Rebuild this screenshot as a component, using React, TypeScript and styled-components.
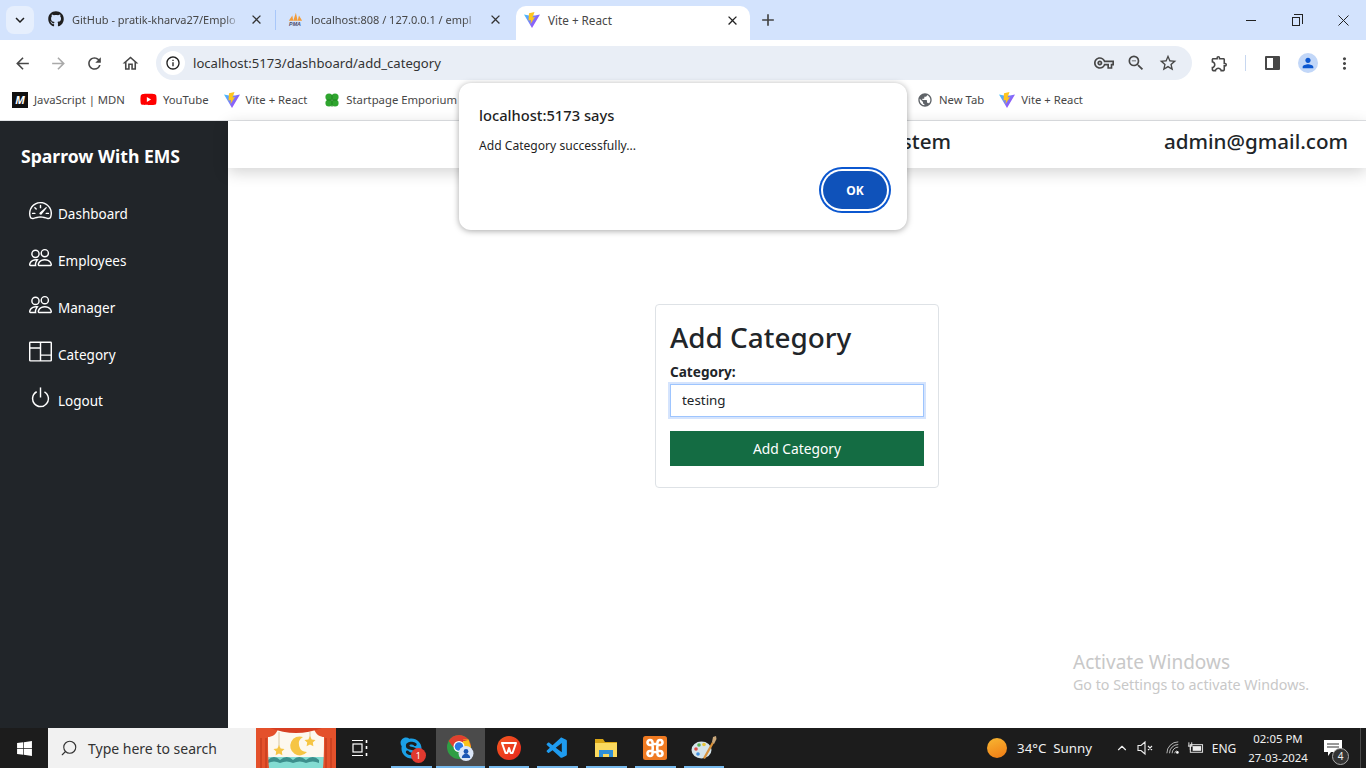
import * as React from 'react';
import styled, { createGlobalStyle } from 'styled-components';
import { BsSpeedometer2, BsPeople, BsColumns, BsPower } from 'react-icons/bs';
import {
  MdArrowBack, MdArrowForward, MdRefresh, MdOutlineHome, MdInfoOutline, MdOutlineVpnKey, MdOutlineZoomOut,
  MdStarBorder, MdOutlineExtension, MdMoreVert, MdPerson, MdClose, MdAdd, MdKeyboardArrowDown, MdPublic,
} from 'react-icons/md';
import { FaGithub, FaYoutube, FaWindows, FaSkype } from 'react-icons/fa';
import { VscVscode } from 'react-icons/vsc';
import { FiSearch, FiChevronUp } from 'react-icons/fi';

const GlobalStyle = createGlobalStyle`
  html, body { margin: 0; padding: 0; height: 100%; overflow: hidden; }
  body { font-family: "Noto Sans", "Open Sans", sans-serif; background: #fff; color: #212529; }
  * { box-sizing: border-box; }
`;

const Screen = styled.div`
  position: relative;
  width: 1366px;
  height: 768px;
  display: flex;
  flex-direction: column;
  overflow: hidden;
`;

/* browser chrome */
const TabStrip = styled.div`
  height: 40px;
  flex: none;
  background: #d3e3fd;
  display: flex;
  align-items: flex-start;
  padding: 6px 0 0 6px;
  font-size: 12px;
  color: #474747;
`;

const TabMenu = styled.div`
  width: 28px;
  height: 28px;
  border-radius: 8px;
  background: #e6effd;
  display: flex;
  align-items: center;
  justify-content: center;
  color: #1f1f1f;
  font-size: 18px;
  margin-right: 8px;
`;

const Tab = styled.div<{ $active?: boolean; $w: number; $after?: number }>`
  width: ${p => p.$w}px;
  height: 34px;
  margin-right: ${p => p.$after ?? 0}px;
  display: flex;
  align-items: center;
  gap: 8px;
  padding: 0 10px 6px 6px;
  flex: none;
  border-radius: 10px 10px 0 0;
  background: ${p => (p.$active ? '#fff' : 'transparent')};
  padding-left: ${p => (p.$active ? 8 : 6)}px;
  padding-bottom: ${p => (p.$active ? 6 : 8)}px;
`;

const TabTitle = styled.span<{ $fade?: boolean }>`
  flex: 1;
  white-space: nowrap;
  font-size: ${p => (p.$fade ? 11 : 11.7)}px;
  ${p => p.$fade && `
    -webkit-mask-image: linear-gradient(90deg, #000 90%, transparent);
    mask-image: linear-gradient(90deg, #000 90%, transparent);
  `}
`;

const TabDivider = styled.div`
  width: 1px;
  height: 20px;
  margin: 4px 5px 0 1px;
  background: #a8c7fa;
  flex: none;
`;

const NewTab = styled.div`
  width: 20px;
  height: 28px;
  margin-left: 8px;
  font-size: 20px;
  color: #444;
  display: flex;
  align-items: center;
  justify-content: center;
`;

const WindowControls = styled.div`
  margin-left: auto;
  display: flex;
  height: 28px;
  color: #222;
`;

const WindowButton = styled.div`
  width: 46px;
  height: 28px;
  display: flex;
  align-items: center;
  justify-content: center;
`;

const MinimizeIcon = styled.div`
  width: 10px;
  height: 1px;
  background: #222;
`;

const RestoreIcon = styled.div`
  width: 8px;
  height: 9px;
  margin: 2px 2px 0 0;
  border: 1px solid #222;
  position: relative;
  &::after {
    content: '';
    position: absolute;
    top: -4px;
    right: -4px;
    width: 8px;
    height: 9px;
    border-top: 1px solid #222;
    border-right: 1px solid #222;
  }
`;

const ToolBar = styled.div`
  height: 45px;
  flex: none;
  background: #fff;
  border-radius: 10px 10px 0 0;
  display: flex;
  align-items: center;
  padding: 1px 0 0 12px;
  color: #474747;
`;

const NavIcon = styled.div<{ $muted?: boolean; $gap: number; $before?: number }>`
  width: 20px;
  height: 20px;
  margin-right: ${p => p.$gap}px;
  margin-left: ${p => p.$before ?? 0}px;
  font-size: 19px;
  display: flex;
  align-items: center;
  justify-content: center;
  color: ${p => (p.$muted ? '#a9a9a9' : '#474747')};
  flex: none;
`;

const AddressBar = styled.div`
  width: 1036px;
  height: 34px;
  border-radius: 17px;
  background: #e9eef6;
  display: flex;
  align-items: center;
  padding: 0 14px 0 5px;
  font-size: 14px;
  color: #1f1f1f;
  flex: none;
`;

const SiteInfo = styled.div`
  width: 24px;
  height: 24px;
  border-radius: 50%;
  background: #fff;
  font-size: 16px;
  display: flex;
  align-items: center;
  justify-content: center;
  margin-right: 8px;
`;

const Url = styled.span`
  flex: 1;
  font-size: 13.1px;
  color: #333;
`;

const BarIcons = styled.div`
  display: flex;
  gap: 12px;
  font-size: 20px;
  color: #474747;
`;

const ToolDivider = styled.div`
  width: 1px;
  height: 16px;
  background: #c7d7f0;
  margin: 0 19px 0 16px;
`;

const Avatar = styled.div`
  width: 20px;
  height: 20px;
  border-radius: 50%;
  background: #c2d7f8;
  color: #0b57d0;
  font-size: 16px;
  display: flex;
  align-items: center;
  justify-content: center;
  margin: 0 16px 0 18px;
`;

const PanelIcon = styled.div`
  width: 15px;
  height: 14px;
  border: 2px solid #474747;
  border-right-width: 7px;
  border-radius: 1px;
`;

const BookmarkBar = styled.div`
  height: 36px;
  flex: none;
  background: #fff;
  border-bottom: 1px solid #e1e3e6;
  display: flex;
  align-items: center;
  padding: 0 0 6px 12px;
  font-size: 11.3px;
  color: #474747;
`;

const Bookmark = styled.div<{ $offset?: number }>`
  display: flex;
  align-items: center;
  gap: 6px;
  margin-right: 15px;
  margin-left: ${p => p.$offset ?? 0}px;
  white-space: nowrap;
`;

const MdnMark = styled.div`
  width: 16px;
  height: 16px;
  background: #111;
  color: #fff;
  font-size: 11px;
  font-weight: 700;
  font-style: italic;
  text-align: center;
  line-height: 16px;
`;

/* page */
const Body = styled.div`
  flex: 1;
  display: flex;
  min-height: 0;
`;

const Sidebar = styled.aside`
  width: 228px;
  flex: none;
  background: #212529;
  color: #fff;
  padding: 22px 0 0 21px;
`;

const Brand = styled.div`
  font-size: 17.6px;
  font-weight: 700;
  line-height: 26px;
  margin-bottom: 22px;
  white-space: nowrap;
`;

const NavItem = styled.div`
  display: flex;
  align-items: center;
  height: 46.75px;
  padding-left: 8px;
  font-size: 13.5px;
  gap: 6px;
  svg { font-size: 23px; margin-top: -7px; }
`;

const Main = styled.main`
  flex: 1;
  display: flex;
  flex-direction: column;
  min-width: 0;
`;

const TopBar = styled.header`
  height: 47px;
  flex: none;
  background: #fff;
  box-shadow: 0 4px 16px rgba(0, 0, 0, 0.18);
  display: flex;
  align-items: center;
  padding: 0 18px 8px 0;
  font-size: 20.6px;
  font-weight: 500;
`;

const AppTitle = styled.div`
  width: 723px;
  text-align: right;
  white-space: nowrap;
`;

const UserMail = styled.div`
  margin-left: auto;
  white-space: nowrap;
`;

const Content = styled.div`
  flex: 1;
  display: flex;
  justify-content: center;
  padding-top: 136px;
`;

const Card = styled.form`
  width: 284px;
  height: 184px;
  border: 1px solid #dee2e6;
  border-radius: 4px;
  padding: 14px;
`;

const CardTitle = styled.h2`
  margin: 0 0 8px;
  font-size: 27.9px;
  line-height: 36px;
  font-weight: 500;
`;

const FieldLabel = styled.label`
  display: block;
  font-size: 13.6px;
  font-weight: 700;
  line-height: 17px;
`;

const FieldInput = styled.input`
  display: block;
  width: 254px;
  height: 33px;
  margin: 4px 0 14px;
  border: 1px solid #9ec5fe;
  box-shadow: 0 0 0 2px #d5e4fd;
  outline: 0;
  padding: 0 11px 2px;
  font: inherit;
  font-size: 13.4px;
  color: #212529;
  background: #fff;
`;

const SubmitButton = styled.button`
  display: block;
  width: 254px;
  height: 35px;
  border: 0;
  background: #146c43;
  color: #fff;
  font: inherit;
  font-size: 13.8px;
`;

/* alert */
const Dialog = styled.div`
  position: absolute;
  left: 459px;
  top: 83px;
  width: 448px;
  height: 147px;
  background: #fff;
  border-radius: 12px;
  box-shadow: 0 1px 6px rgba(0, 0, 0, 0.35);
  padding: 22px 20px 0;
`;

const DialogTitle = styled.div`
  font-size: 14.7px;
  line-height: 20px;
  font-weight: 500;
  color: #1f1f1f;
`;

const DialogText = styled.div`
  font-size: 12.1px;
  line-height: 16px;
  margin-top: 13px;
  color: #1f1f1f;
`;

const OkButton = styled.button`
  position: absolute;
  right: 20px;
  top: 88px;
  width: 64px;
  height: 38px;
  border-radius: 19px;
  background: #0f52ba;
  color: #fff;
  border: 0;
  box-shadow: 0 0 0 2px #fff, 0 0 0 4px #0b57d0;
  font: inherit;
  font-size: 12px;
  font-weight: 700;
`;

const Watermark = styled.div`
  position: absolute;
  left: 1073px;
  top: 650px;
  color: #c8c8c8;
  font-size: 19px;
  line-height: 24px;
  white-space: nowrap;
  small { display: block; font-size: 14.25px; line-height: 22px; }
`;

/* taskbar */
const TaskBar = styled.footer`
  height: 40px;
  flex: none;
  background: #1c1c1c;
  display: flex;
  align-items: stretch;
  color: #fff;
`;

const StartButton = styled.div`
  width: 48px;
  display: flex;
  align-items: center;
  justify-content: center;
  font-size: 17px;
`;

const SearchBox = styled.div`
  width: 208px;
  background: #f1f1f1;
  color: #333;
  display: flex;
  align-items: center;
  gap: 10px;
  padding-left: 12px;
  font-size: 14px;
  svg { transform: scaleX(-1); font-size: 18px; stroke-width: 1.5; }
`;

const Promo = styled.div`
  width: 80px;
  flex: none;
  svg { display: block; }
`;

const TaskSlot = styled.div<{ $active?: boolean; $pinned?: boolean }>`
  width: 48.75px;
  position: relative;
  flex: none;
  display: flex;
  align-items: center;
  justify-content: center;
  background: ${p => (p.$active ? '#4b4b4b' : 'transparent')};
  font-size: 24px;
  &::after {
    content: '';
    display: ${p => (p.$pinned ? 'block' : 'none')};
    position: absolute;
    bottom: 0;
    left: ${p => (p.$active ? 0 : 4)}px;
    right: ${p => (p.$active ? 0 : 4)}px;
    height: 2px;
    background: #76b9ed;
  }
`;

const TaskView = styled(TaskSlot)`
  width: 48px;
  margin-right: 3px;
`;

const SkypeBadge = styled.span`
  position: absolute;
  right: 10px;
  bottom: 5px;
  width: 15px;
  height: 15px;
  border-radius: 50%;
  background: #e0392f;
  color: #fff;
  font-size: 9px;
  line-height: 15px;
  text-align: center;
`;

const Tray = styled.div`
  margin-left: auto;
  display: flex;
  align-items: center;
  font-size: 13px;
  color: #f0f0f0;
`;

const Sun = styled.div`
  width: 20px;
  height: 20px;
  border-radius: 50%;
  background: linear-gradient(160deg, #f7b733, #f07a13);
  margin-right: 10px;
`;

const Weather = styled.span`
  margin-right: 23px;
  font-size: 13.3px;
  white-space: nowrap;
`;

const TrayIcon = styled.div<{ $w: number }>`
  width: ${p => p.$w}px;
  display: flex;
  align-items: center;
  justify-content: center;
  font-size: 16px;
`;

const LangLabel = styled(TrayIcon)`
  font-size: 12px;
`;

const Clock = styled.div`
  width: 74px;
  text-align: center;
  font-size: 11.4px;
  line-height: 19px;
  white-space: nowrap;
`;

const Notify = styled.div`
  position: relative;
  width: 46px;
  height: 40px;
  display: flex;
  align-items: center;
  justify-content: center;
  padding-right: 10px;
  border-right: 1px solid #4a4a4a;
  margin-right: 5px;
`;

const NotifyCount = styled.span`
  position: absolute;
  left: 17px;
  top: 20px;
  width: 17px;
  height: 17px;
  border-radius: 50%;
  background: #333;
  border: 1px solid #aaa;
  font-size: 10px;
  line-height: 15px;
  text-align: center;
`;

const ViteLogo = () => (
  <svg width="16" height="16" viewBox="0 0 32 32">
    <defs>
      <linearGradient id="viteBody" x1="0" y1="0" x2="1" y2="0.6">
        <stop offset="0" stopColor="#41c8ff" />
        <stop offset="1" stopColor="#a53cf5" />
      </linearGradient>
    </defs>
    <path d="M0 5l16 27L32 5l-10 2H10z" fill="url(#viteBody)" />
    <path d="M21 0 10 2.500 9 17l5-1-1 8 9-14-5 1 4-11z" fill="#ffc61f" />
  </svg>
);

const PmaLogo = () => (
  <svg width="16" height="16" viewBox="0 0 18 16">
    <path d="M2 10 6 4l1 6zM7 10l3-9 2 9zM12 10l1.500-6 3.500 6z" fill="#f29b38" />
    <text x="9" y="15.500" textAnchor="middle" fontSize="6" fontWeight="700" fontStyle="italic" fill="#4a4a68" fontFamily="Liberation Sans, sans-serif">PMA</text>
  </svg>
);

const Clover = () => (
  <svg width="16" height="16" viewBox="0 0 16 16">
    <g fill="#2fa52f">
      <circle cx="5" cy="5" r="3.600" />
      <circle cx="11" cy="5" r="3.600" />
      <circle cx="5" cy="11" r="3.600" />
      <circle cx="11" cy="11" r="3.600" />
    </g>
    <path d="M8 3v12M3 8h10" stroke="#1b7a1b" strokeWidth="0.700" />
  </svg>
);

const ChromeLogo = () => (
  <svg width="27" height="26" viewBox="0 0 27 26">
    <circle cx="12" cy="12" r="12" fill="#2f9e44" />
    <path d="M12 0a12 12 0 0 0-10.400 6L6 12h18a12 12 0 0 0-12-12z" fill="#e0402f" />
    <path d="M24 12H12l4 10a12 12 0 0 0 8-10zM16 4.500h5.500L24 12H16z" fill="#f9c31c" />
    <path d="M12 3.500 21 6l-5 0-4-2.500z" fill="#e0402f" />
    <circle cx="12" cy="11.500" r="5.500" fill="#fff" />
    <circle cx="12" cy="11.500" r="4.300" fill="#2a78e4" />
    <circle cx="19" cy="18.500" r="7.500" fill="#dbe6f8" />
    <circle cx="19" cy="16.500" r="2.400" fill="#1a56b4" />
    <path d="M14.800 23a4.200 4.200 0 0 1 8.400 0z" fill="#1a56b4" />
  </svg>
);

const WpsLogo = () => (
  <svg width="24" height="24" viewBox="0 0 24 24">
    <defs>
      <linearGradient id="wpsBody" x1="0" y1="0" x2="1" y2="1">
        <stop offset="0" stopColor="#f4581f" />
        <stop offset="1" stopColor="#e5271f" />
      </linearGradient>
    </defs>
    <circle cx="12" cy="12" r="12" fill="url(#wpsBody)" />
    <path d="M5 7h14l-3.500 10h-1.800L12 12l-1.700 5H8.500z" fill="none" stroke="#fff" strokeWidth="2" strokeLinejoin="round" />
  </svg>
);

const FolderLogo = () => (
  <svg width="22" height="20" viewBox="0 0 22 20">
    <path d="M0 1h8l2 3h12v15H0z" fill="#d9a514" />
    <path d="M0 5h22v14H0z" fill="#fbd95e" />
    <path d="M4 19v-7h14v7h-4v-3H8v3z" fill="#2f8fd8" />
  </svg>
);

const XamppLogo = () => (
  <svg width="24" height="24" viewBox="0 0 24 24">
    <rect width="24" height="24" rx="2.500" fill="#ef7a22" />
    <path
      d="M9 9H7a2.500 2.500 0 1 1 2.500-2.500c0 1.500 1.500 1.500 2.500 1.500s2.500 0 2.500-1.500A2.500 2.500 0 1 1 17 9h-2c-1 0-1 6 0 6h2a2.500 2.500 0 1 1-2.500 2.500c0-1.500-1.500-1.500-2.500-1.500s-2.500 0-2.500 1.500A2.500 2.500 0 1 1 7 15h2c1 0 1-6 0-6z"
      fill="none"
      stroke="#fff"
      strokeWidth="2.600"
    />
  </svg>
);

const PaintLogo = () => (
  <svg width="26" height="26" viewBox="0 0 26 26">
    <ellipse cx="10.500" cy="15" rx="10" ry="8.500" fill="#d5e4ea" />
    <circle cx="5" cy="14" r="1.800" fill="#dd4a45" />
    <circle cx="8" cy="10" r="1.800" fill="#58b155" />
    <circle cx="13" cy="9.500" r="1.800" fill="#e8c53a" />
    <circle cx="7" cy="19" r="1.800" fill="#3f8fe0" />
    <path d="M12 23 21 7l2 1-9 16z" fill="#d8913a" />
    <path d="M21 7l1-5 3-1 .5 3-2.500 5z" fill="#c9a77a" />
  </svg>
);

const PromoArt = () => (
  <svg width="80" height="40" viewBox="0 0 80 40">
    <rect width="80" height="40" fill="#fdf8ef" />
    <rect y="29" width="80" height="11" fill="#83dcd2" />
    <path d="M12 32q6-6 12 0 7-6 13 0 6-6 13 0 7-6 13 0v3q-6-3-13 0-6-3-13 0-6-3-13 0-6-3-12 0z" fill="#3c8f8c" />
    <path d="M0 0h22c-1 7-7 9-10 9 0 10 0 21 1 31H0z" fill="#e4512b" />
    <path d="M80 0H58c1 7 7 9 10 9 0 10 0 21-1 31h13z" fill="#e4512b" />
    <path d="M5 10v30M10 10v30M75 10v30M70 10v30" stroke="#c23a1c" strokeWidth="1.200" />
    <path d="M14 0h52q-26 10-52 0z" fill="#d73f22" />
    <path d="M23 4v14M54 4v8" stroke="#d9c9a2" strokeWidth="1" />
    <path d="M47 9a9.500 9.500 0 1 0 4 15 8 8 0 0 1-4-15z" fill="#f6c544" />
    <path d="m23 17 1.700 3.400 3.800.5-2.700 2.600.6 3.700-3.400-1.800-3.400 1.800.6-3.700-2.700-2.600 3.800-.5zM54 8l1.700 3.400 3.800.5-2.700 2.600.6 3.700-3.400-1.800-3.400 1.800.6-3.700-2.700-2.600 3.800-.5z" fill="#f6c544" />
  </svg>
);

const TaskViewIcon = () => (
  <svg width="20" height="20" viewBox="0 0 20 20" fill="none" stroke="#fff" strokeWidth="1.200">
    <path d="M2 2.500h11M2 17.500h11" />
    <rect x="3" y="6" width="9" height="8" />
    <path d="M16.500 2v3M16.500 8v3M16.500 15v3" strokeWidth="1.600" />
  </svg>
);

const SpeakerMuted = () => (
  <svg width="18" height="16" viewBox="0 0 18 16" fill="none" stroke="#eee" strokeWidth="1.100">
    <path d="M1 5.500h3L8 2v12L4 10.500H1zM11 6l4 4M15 6l-4 4" />
  </svg>
);

const WifiIcon = () => (
  <svg width="14" height="14" viewBox="0 0 16 16" fill="none" stroke="#ccc" strokeWidth="1">
    <path d="M1 14A13 13 0 0 1 14 1M4 14A10 10 0 0 1 14 4M7 14a7 7 0 0 1 7-7M10 14a4 4 0 0 1 2-3" />
    <circle cx="13" cy="13" r="1.500" fill="#fff" stroke="none" />
  </svg>
);

const BatteryIcon = () => (
  <svg width="17" height="14" viewBox="0 0 18 14" fill="none" stroke="#eee">
    <rect x="3.500" y="3.500" width="13" height="8" />
    <rect x="6" y="5" width="9" height="5" fill="#eee" stroke="none" />
    <path d="M2 1v4M5 1v4M1 5h5M3.500 5v4" />
  </svg>
);

const NotifyIcon = () => (
  <svg width="18" height="18" viewBox="0 0 18 18">
    <path d="M0 1h18v12H7l-3 4v-4H0z" fill="#fff" />
    <path d="M3 5h12M3 8h12" stroke="#333" />
  </svg>
);

const CloseGlyph = () => (
  <svg width="11" height="11" viewBox="0 0 11 11" stroke="#222" strokeWidth="1">
    <path d="M.5.500l10 10M10.500.500l-10 10" />
  </svg>
);

const App = () => (
  <Screen>
    <GlobalStyle />
    <TabStrip>
      <TabMenu><MdKeyboardArrowDown /></TabMenu>
      <Tab $w={232}>
        <FaGithub size={16} color="#1f1f1f" />
        <TabTitle $fade>GitHub - pratik-kharva27/Emplo</TabTitle>
        <MdClose size={15} color="#333" />
      </Tab>
      <TabDivider />
      <Tab $w={232} $after={3}>
        <PmaLogo />
        <TabTitle $fade>localhost:808 / 127.0.0.1 / empl</TabTitle>
        <MdClose size={15} color="#333" />
      </Tab>
      <Tab $active $w={234}>
        <ViteLogo />
        <TabTitle>Vite + React</TabTitle>
        <MdClose size={15} color="#222" />
      </Tab>
      <NewTab><MdAdd /></NewTab>
      <WindowControls>
        <WindowButton><MinimizeIcon /></WindowButton>
        <WindowButton><RestoreIcon /></WindowButton>
        <WindowButton><CloseGlyph /></WindowButton>
      </WindowControls>
    </TabStrip>

    <ToolBar>
      <NavIcon $gap={16}><MdArrowBack /></NavIcon>
      <NavIcon $gap={16} $muted><MdArrowForward /></NavIcon>
      <NavIcon $gap={16}><MdRefresh /></NavIcon>
      <NavIcon $gap={16}><MdOutlineHome /></NavIcon>
      <AddressBar>
        <SiteInfo><MdInfoOutline /></SiteInfo>
        <Url>localhost:5173/dashboard/add_category</Url>
        <BarIcons>
          <MdOutlineVpnKey />
          <MdOutlineZoomOut />
          <MdStarBorder />
        </BarIcons>
      </AddressBar>
      <NavIcon $gap={0} $before={17}><MdOutlineExtension /></NavIcon>
      <ToolDivider />
      <PanelIcon />
      <Avatar><MdPerson /></Avatar>
      <NavIcon $gap={0}><MdMoreVert /></NavIcon>
    </ToolBar>

    <BookmarkBar>
      <Bookmark><MdnMark>M</MdnMark>JavaScript | MDN</Bookmark>
      <Bookmark><FaYoutube size={17} color="#f00" />YouTube</Bookmark>
      <Bookmark><ViteLogo />Vite + React</Bookmark>
      <Bookmark $offset={2}><Clover />Startpage Emporium</Bookmark>
      <Bookmark $offset={445}><MdPublic size={16} color="#5f6368" />New Tab</Bookmark>
      <Bookmark><ViteLogo />Vite + React</Bookmark>
    </BookmarkBar>

    <Body>
      <Sidebar>
        <Brand>Sparrow With EMS</Brand>
        <NavItem><BsSpeedometer2 /><span>Dashboard</span></NavItem>
        <NavItem><BsPeople /><span>Employees</span></NavItem>
        <NavItem><BsPeople /><span>Manager</span></NavItem>
        <NavItem><BsColumns /><span>Category</span></NavItem>
        <NavItem><BsPower /><span>Logout</span></NavItem>
      </Sidebar>
      <Main>
        <TopBar>
          <AppTitle>Employee Management System</AppTitle>
          <UserMail>admin@gmail.com</UserMail>
        </TopBar>
        <Content>
          <Card>
            <CardTitle>Add Category</CardTitle>
            <FieldLabel htmlFor="category">Category:</FieldLabel>
            <FieldInput id="category" defaultValue="testing" />
            <SubmitButton type="button">Add Category</SubmitButton>
          </Card>
        </Content>
      </Main>
    </Body>

    <TaskBar>
      <StartButton><FaWindows /></StartButton>
      <SearchBox><FiSearch />Type here to search</SearchBox>
      <Promo><PromoArt /></Promo>
      <TaskView><TaskViewIcon /></TaskView>
      <TaskSlot $pinned><FaSkype color="#1ba0e6" size={25} /><SkypeBadge>1</SkypeBadge></TaskSlot>
      <TaskSlot $pinned $active><ChromeLogo /></TaskSlot>
      <TaskSlot $pinned><WpsLogo /></TaskSlot>
      <TaskSlot $pinned><VscVscode color="#1f9cf0" size={25} /></TaskSlot>
      <TaskSlot $pinned><FolderLogo /></TaskSlot>
      <TaskSlot $pinned><XamppLogo /></TaskSlot>
      <TaskSlot $pinned><PaintLogo /></TaskSlot>
      <Tray>
        <Sun />
        <Weather>34°C&nbsp; Sunny</Weather>
        <TrayIcon $w={14}><FiChevronUp /></TrayIcon>
        <TrayIcon $w={34}><SpeakerMuted /></TrayIcon>
        <TrayIcon $w={20}><WifiIcon /></TrayIcon>
        <TrayIcon $w={24}><BatteryIcon /></TrayIcon>
        <LangLabel $w={34}>ENG</LangLabel>
        <Clock>02:05 PM<br />27-03-2024</Clock>
        <Notify>
          <NotifyIcon />
          <NotifyCount>4</NotifyCount>
        </Notify>
      </Tray>
    </TaskBar>

    <Dialog>
      <DialogTitle>localhost:5173 says</DialogTitle>
      <DialogText>Add Category successfully...</DialogText>
      <OkButton type="button">OK</OkButton>
    </Dialog>

    <Watermark>
      Activate Windows
      <small>Go to Settings to activate Windows.</small>
    </Watermark>
  </Screen>
);

export default App;
